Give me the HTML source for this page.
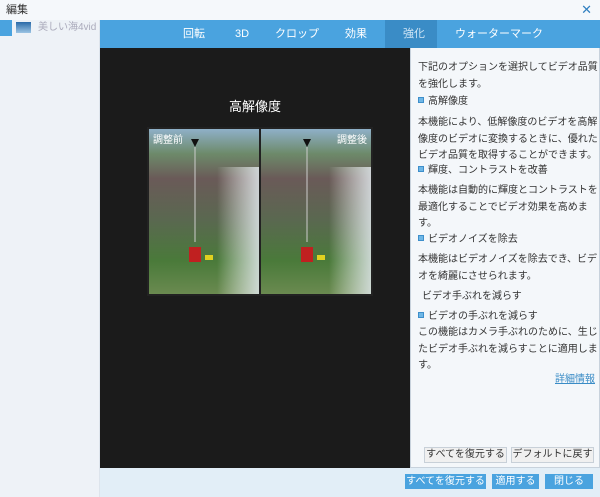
<!DOCTYPE html>
<html><head><meta charset="utf-8"><style>
*{margin:0;padding:0;box-sizing:border-box}
body{width:600px;height:497px;overflow:hidden;background:#f3f6fa;font-family:"Liberation Sans","Noto Sans CJK JP",sans-serif;position:relative;color:#333}
.abs{position:absolute}
.title{left:0;top:0;width:600px;height:20px;background:#f5f8fb;font-size:11px;line-height:20px;padding-left:6px;color:#333}
.close{right:8px;top:0;font-size:13px;line-height:20px;color:#2f7fc0}
.side{left:0;top:20px;width:100px;height:477px;background:#eef2f7;border-right:1px solid #dde4ec}
.tabs{left:100px;top:20px;width:500px;height:28px;background:#4aa3df}
.tab{top:20px;height:28px;line-height:28px;font-size:11px;color:#fff;white-space:nowrap}
.dark{left:100px;top:48px;width:310px;height:420px;background:#1b1b1b}
.right{left:410px;top:48px;width:190px;height:420px;background:#f4f7fa;border:1px solid #c8d2dc;border-top:none}
.txt{font-size:10px;line-height:16.5px;color:#333}
.bot{left:100px;top:468px;width:500px;height:29px;background:#e2eef7}
.bb{height:15px;font-size:10px;line-height:15px;color:#fff;background:#4aa3df;text-align:center}
.wb{height:16px;font-size:10px;line-height:14px;border:1px solid #c8d0d8;background:#f0f0f0;text-align:center}
.ic{display:inline-block;width:6px;height:6px;background:#6fb7e6;border:1px solid #3e8fcb;margin-right:4px;vertical-align:1px}
</style></head><body>
<div class="abs title">編集</div>
<div class="abs close">✕</div>
<div class="abs side"></div>
<div class="abs" style="left:0;top:20px;width:12px;height:16px;background:#4aa3df"></div>
<div class="abs" style="left:16px;top:22px;width:15px;height:11px;background:linear-gradient(#2a6aa8,#9cc4e4)"></div>
<div class="abs" style="left:38px;top:20px;font-size:10px;line-height:16px;color:#aab">美しい海4vid</div>
<div class="abs tabs"></div>
<div class="abs" style="left:385px;top:20px;width:52px;height:28px;background:#3a8cc6"></div>
<div class="abs tab" style="left:183px">回転</div>
<div class="abs tab" style="left:235px">3D</div>
<div class="abs tab" style="left:275px">クロップ</div>
<div class="abs tab" style="left:345px">効果</div>
<div class="abs tab" style="left:403px;color:#cfe5f5">強化</div>
<div class="abs tab" style="left:455px">ウォーターマーク</div>
<div class="abs dark"></div>
<div class="abs" style="left:100px;top:96px;width:310px;text-align:center;font-size:13px;color:#fff">高解像度</div>
<svg class="abs" style="left:147px;top:127px" width="226" height="169">
<defs><linearGradient id="g" x1="0" y1="0" x2="0" y2="1"><stop offset="0" stop-color="#8fb0c8"/><stop offset=".15" stop-color="#6d8a6a"/><stop offset=".3" stop-color="#6a5a58"/><stop offset=".55" stop-color="#5a6850"/><stop offset=".8" stop-color="#4a7a3a"/><stop offset="1" stop-color="#6a8a50"/></linearGradient>
<linearGradient id="c" x1="0" y1="0" x2="1" y2="0"><stop offset="0" stop-color="#fff" stop-opacity="0"/><stop offset="1" stop-color="#dfe6ea" stop-opacity=".85"/></linearGradient></defs>
<rect width="226" height="169" fill="#222"/>
<rect x="2" y="2" width="110" height="165" fill="url(#g)"/>
<rect x="114" y="2" width="110" height="165" fill="url(#g)"/>
<rect x="70" y="40" width="42" height="127" fill="url(#c)"/>
<rect x="182" y="40" width="42" height="127" fill="url(#c)"/>
<line x1="48" y1="20" x2="48" y2="115" stroke="#ccc" stroke-width="1"/>
<line x1="160" y1="20" x2="160" y2="115" stroke="#ccc" stroke-width="1"/>
<path d="M44 12h8l-4 8z M156 12h8l-4 8z" fill="#111"/>
<rect x="42" y="120" width="12" height="15" fill="#c02020"/>
<rect x="154" y="120" width="12" height="15" fill="#c02020"/>
<rect x="58" y="128" width="8" height="5" fill="#e0d020"/>
<rect x="170" y="128" width="8" height="5" fill="#e0d020"/>
<text x="6" y="16" font-size="10" fill="#fff" font-family="Liberation Sans,Noto Sans CJK JP,sans-serif">調整前</text>
<text x="190" y="16" font-size="10" fill="#fff" font-family="Liberation Sans,Noto Sans CJK JP,sans-serif">調整後</text>
</svg>
<div class="abs right"></div>
<div class="abs txt" style="left:418px;top:60px;width:182px">下記のオプションを選択してビデオ品質を強化します。</div>
<div class="abs txt" style="left:418px;top:94px"><span class="ic"></span>高解像度</div>
<div class="abs txt" style="left:418px;top:115px;width:182px">本機能により、低解像度のビデオを高解像度のビデオに変換するときに、優れたビデオ品質を取得することができます。</div>
<div class="abs txt" style="left:418px;top:163px"><span class="ic"></span>輝度、コントラストを改善</div>
<div class="abs txt" style="left:418px;top:183px;width:182px">本機能は自動的に輝度とコントラストを最適化することでビデオ効果を高めます。</div>
<div class="abs txt" style="left:418px;top:232px"><span class="ic"></span>ビデオノイズを除去</div>
<div class="abs txt" style="left:418px;top:252px;width:182px">本機能はビデオノイズを除去でき、ビデオを綺麗にさせられます。</div>
<div class="abs txt" style="left:422px;top:289px">ビデオ手ぶれを減らす</div>
<div class="abs txt" style="left:418px;top:309px"><span class="ic"></span>ビデオの手ぶれを減らす</div>
<div class="abs txt" style="left:418px;top:325px;width:182px">この機能はカメラ手ぶれのために、生じたビデオ手ぶれを減らすことに適用します。</div>
<div class="abs txt" style="left:555px;top:372px;color:#3a8cc6;text-decoration:underline">詳細情報</div>
<div class="abs wb" style="left:424px;top:447px;width:83px">すべてを復元する</div>
<div class="abs wb" style="left:511px;top:447px;width:83px">デフォルトに戻す</div>
<div class="abs bot"></div>
<div class="abs bb" style="left:405px;top:474px;width:81px">すべてを復元する</div>
<div class="abs bb" style="left:492px;top:474px;width:47px">適用する</div>
<div class="abs bb" style="left:545px;top:474px;width:48px">閉じる</div>
</body></html>
